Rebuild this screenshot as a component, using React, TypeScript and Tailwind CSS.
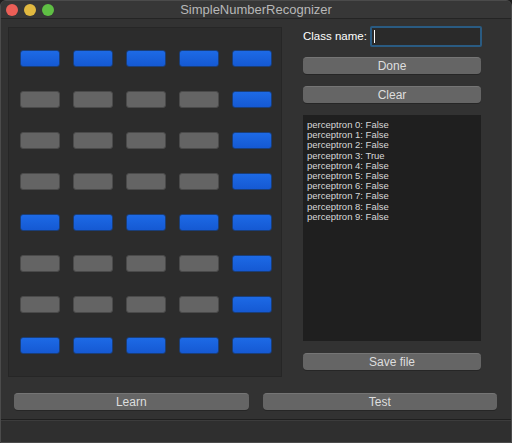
import React from "react";

// digit "3" drawn on the 5x8 grid
const grid = [
  [1, 1, 1, 1, 1],
  [0, 0, 0, 0, 1],
  [0, 0, 0, 0, 1],
  [0, 0, 0, 0, 1],
  [1, 1, 1, 1, 1],
  [0, 0, 0, 0, 1],
  [0, 0, 0, 0, 1],
  [1, 1, 1, 1, 1],
];

const results = Array.from({ length: 10 }, (_, i) => `perceptron ${i}: ${i === 3 ? "True" : "False"}`);

function Button({ label, className = "" }: { label: string; className?: string }) {
  return (
    <div
      className={`h-[17px] rounded-[4px] bg-[#656565] border-t border-[#757575] shadow-[0_1px_0_#262626] flex items-center justify-center text-[12px] leading-none text-[#dedede] ${className}`}
    >
      {label}
    </div>
  );
}

export default function App() {
  return (
    <div className="w-[512px] h-[443px] bg-[#1e1e1e] font-['Liberation_Sans',Arial,sans-serif]">
      <div className="w-full h-full rounded-t-[6px] border border-[#4b4b4b] bg-[#323232] flex flex-col overflow-hidden">
        {/* title bar */}
        <div className="h-[18px] shrink-0 bg-[#373737] border-b border-[#242424] relative flex items-center justify-center">
          <div className="absolute left-[5px] top-[3px] flex gap-[6px]">
            <span className="w-[12px] h-[12px] rounded-full bg-[#ec5f57]" />
            <span className="w-[12px] h-[12px] rounded-full bg-[#e1b940]" />
            <span className="w-[12px] h-[12px] rounded-full bg-[#5fbf44]" />
          </div>
          <span className="text-[13px] text-[#b8b8b8]">SimpleNumberRecognizer</span>
        </div>

        <div className="flex pl-[7px] pt-[8px] h-[358px]">
          {/* grid panel */}
          <div className="w-[274px] h-[350px] bg-[#2c2c2c] border border-[#262626] pt-[22px] pl-[11px] flex flex-col gap-[24px]">
            {grid.map((row, r) => (
              <div key={r} className="flex gap-[13px]">
                {row.map((on, c) => (
                  <div
                    key={c}
                    className={
                      on
                        ? "w-[40px] h-[17px] rounded-[3px] bg-gradient-to-b from-[#1d6ae6] to-[#1559d3] border border-[#1a3e78]"
                        : "w-[40px] h-[17px] rounded-[3px] bg-[#646464] border border-[#4a4a4a]"
                    }
                  />
                ))}
              </div>
            ))}
          </div>

          {/* right column */}
          <div className="ml-[21px] w-[178px] flex flex-col">
            <div className="flex items-center h-[21px] mt-[-1px]">
              <span className="w-[67px] shrink-0 whitespace-nowrap text-[11.5px] text-white">Class name:</span>
              <div className="shrink-0 w-[112px] h-[21px] rounded-[2px] border-[2.5px] border-[#2a5b82] bg-[#2a2a2a] flex items-center pl-[2px]">
                <span className="w-[1px] h-[13px] bg-white" />
              </div>
            </div>
            <Button label="Done" className="mt-[10px]" />
            <Button label="Clear" className="mt-[12px]" />
            <div className="mt-[12px] h-[226px] bg-[#1f1f1f] pt-[5px] pl-[4px] flex flex-col">
              {results.map((t) => (
                <span key={t} className="text-[9.5px] leading-[10.2px] text-[#d8d8d8]">
                  {t}
                </span>
              ))}
            </div>
            <Button label="Save file" className="mt-[12px]" />
          </div>
        </div>

        {/* bottom buttons */}
        <div className="flex gap-[14px] pl-[13px] pr-[14px] pt-[16px]">
          <Button label="Learn" className="flex-1" />
          <Button label="Test" className="flex-1" />
        </div>

        <div className="mt-auto h-[23px] border-t border-[#1f1f1f] shadow-[inset_0_1px_0_#3c3c3c] bg-[#2f2f2f]" />
      </div>
    </div>
  );
}
